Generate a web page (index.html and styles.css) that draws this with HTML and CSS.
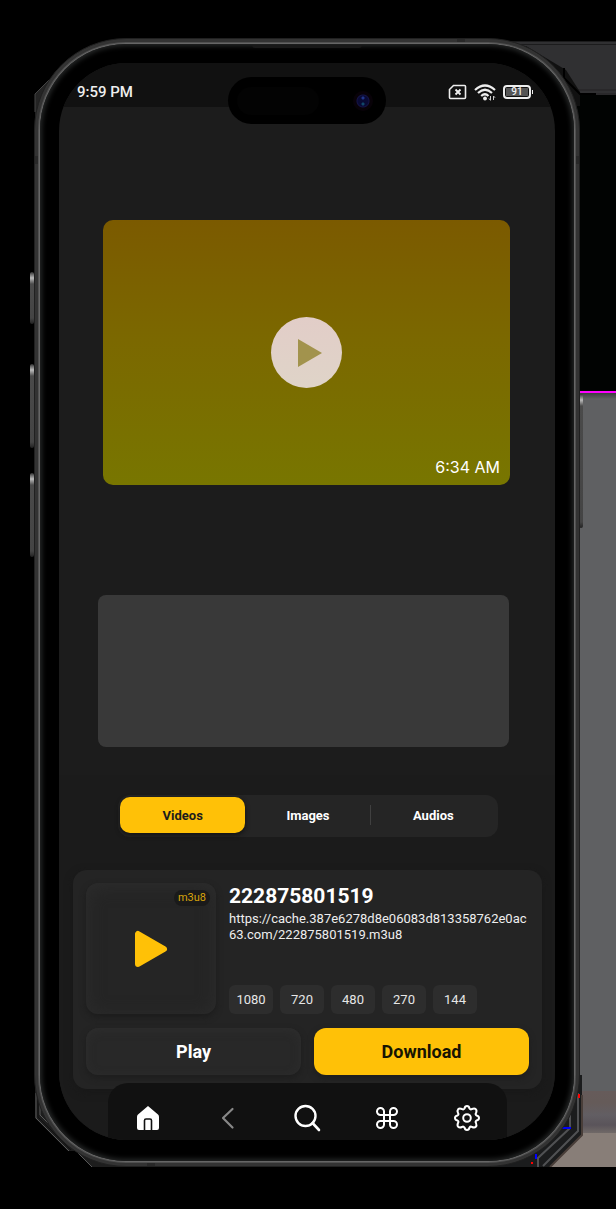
FILE: index.html
```html
<!DOCTYPE html>
<html lang="en">
<head>
<meta charset="utf-8">
<meta name="viewport" content="width=device-width, initial-scale=1">
<title>Video downloader</title>
<link rel="stylesheet" href="styles.css">
</head>
<body>
<div class="stage">
  <div class="backdrop" aria-hidden="true">
    <div class="backdrop-top"></div>
    <div class="backdrop-dark"></div>
    <div class="backdrop-grey"></div>
    <div class="backdrop-haze"></div>
    <div class="backdrop-floor"></div>
  </div>

  <div class="phone">
    <svg class="facet facet-tl" viewBox="0 0 50 60" aria-hidden="true"><path d="M1 60V28L17 12L50 0V60Z" fill="#242424"/><path d="M1 46V28L15 14" fill="none" stroke="#444"/></svg>
    <svg class="facet facet-tr" viewBox="0 0 90 60" aria-hidden="true"><path d="M0 0H20L60 24L74 46V60H0Z" fill="#111"/><path d="M58 22V32L74 48H90" fill="none" stroke="#000" stroke-width="2"/></svg>
    <svg class="facet facet-bl" viewBox="0 0 92 92" aria-hidden="true"><path d="M1 0V43L34 76H42L58 92H92V0Z" fill="#1d1d1d"/><path d="M2 18V43L35 76M6 20V40L58 92" fill="none" stroke="#585858"/><path d="M4 18V42L37 75" fill="none" stroke="#111"/></svg>
    <svg class="facet facet-br" viewBox="0 0 92 92" aria-hidden="true"><path d="M91 0V60L59 92H0V0Z" fill="#1b1c1d"/><path d="M87 18V56L52 91M79 28V53L47 83V92" fill="none" stroke="#505153" stroke-width="2"/><path d="M91 20V60L59 92" fill="none" stroke="#493e39" stroke-width="2"/><path d="M70 53H80M45 79V84" stroke="#00f" stroke-width="2"/><path d="M88 19V23M69 53H71M40 88H42" stroke="#f00" stroke-width="2"/></svg>
    <span class="side-key key-action"></span>
    <span class="side-key key-up"></span>
    <span class="side-key key-down"></span>
    <span class="side-key key-power"></span>

    <div class="frame">
      <span class="antenna antenna-top"></span>
      <span class="antenna antenna-left"></span>
      <span class="antenna antenna-right"></span>
      <span class="antenna antenna-foot"></span>
      <div class="bezel">
        <span class="earpiece"></span>
        <div class="screen">
          <header class="status">
            <time>9:59 PM</time>
            <div class="status-icons">
              <svg width="19" height="16" viewBox="0 0 19 16" aria-label="No SIM"><path d="M5.5 1.5H16.5Q17.5 1.5 17.5 2.5V13.5Q17.5 14.5 16.5 14.5H2.500Q1.500 14.5 1.500 13.5V5.500Z" fill="none" stroke="#eee" stroke-width="1.600"/><path d="M7.500 5.500L12.500 10.500M12.500 5.500L7.500 10.500" stroke="#eee" stroke-width="1.900"/></svg>
              <svg width="22" height="17" viewBox="0 0 22 17" aria-label="Wi-Fi"><path d="M1 6Q11-3 21 6M4 9Q11 2.500 18 9M7.200 12Q11 8.500 14.500 12" fill="none" stroke="#eee" stroke-width="2.200"/><circle cx="11" cy="14.500" r="1.900" fill="#eee"/><path d="M16.500 12V16M15 14.500L16.500 16.500M19.500 16V12M19.500 12L21 13.700" stroke="#ccc" stroke-width="1"/></svg>
              <span class="battery"><span>91</span></span>
            </div>
          </header>
          <div class="island"><span class="island-pill"></span><span class="lens"></span></div>

          <main class="content">
            <section class="video">
              <button class="video-play" type="button" aria-label="Play video"><svg width="26" height="30" viewBox="0 0 26 30"><path d="M1 1L25 15L1 29Z" fill="#a2934d"/></svg></button>
              <time class="video-time">6:34 AM</time>
            </section>
            <section class="placeholder"></section>

            <section class="sheet">
              <nav class="tabs" aria-label="Media type">
                <button class="tab tab-active" type="button">Videos</button>
                <button class="tab" type="button">Images</button>
                <button class="tab tab-last" type="button">Audios</button>
              </nav>
              <article class="card">
                <div class="media">
                  <div class="thumb">
                    <span class="badge">m3u8</span>
                    <svg width="36" height="40" viewBox="0 0 36 40" aria-hidden="true"><path d="M5 5V35L31 20Z" fill="#ffc107" stroke="#ffc107" stroke-width="6" stroke-linejoin="round"/></svg>
                  </div>
                  <div class="info">
                    <h1>222875801519</h1>
                    <p>https://cache.387e6278d8e06083d813358762e0ac63.com/222875801519.m3u8</p>
                    <div class="sizes">
                      <button type="button">1080</button><button type="button">720</button><button type="button">480</button><button type="button">270</button><button type="button">144</button>
                    </div>
                  </div>
                </div>
                <div class="actions">
                  <button class="play" type="button">Play</button>
                  <button class="download" type="button">Download</button>
                </div>
              </article>
            </section>
          </main>

          <nav class="dock" aria-label="Main">
            <button type="button" aria-label="Home"><svg width="28" height="28" viewBox="0 0 28 28"><path d="M14 2L24 10.500Q25 11.300 25 13V24Q25 26 23 26H5Q3 26 3 24V13Q3 11.300 4 10.500Z" fill="#fff"/><path d="M10.500 26V16.500Q10.500 15 12 15H16Q17.500 15 17.500 16.500V26" fill="#fff" stroke="#111" stroke-width="1.600"/></svg></button>
            <button type="button" aria-label="Back"><svg width="28" height="28" viewBox="0 0 28 28"><path d="M18.500 5L9 14L18.500 23.500" fill="none" stroke="#888" stroke-width="2.200" stroke-linecap="round" stroke-linejoin="round"/></svg></button>
            <button type="button" aria-label="Search"><svg width="28" height="28" viewBox="0 0 28 28"><circle cx="12.500" cy="12" r="10" fill="none" stroke="#fff" stroke-width="2.400"/><path d="M19.500 19L26 26" stroke="#fff" stroke-width="2.600" stroke-linecap="round"/></svg></button>
            <button type="button" aria-label="Shortcuts"><svg width="28" height="28" viewBox="0 0 28 28"><path d="M11 11H7.500A3.500 3.500 0 1 1 11 7.500V20.500A3.500 3.500 0 1 1 7.500 17H20.500A3.500 3.500 0 1 1 17 20.500V7.500A3.500 3.500 0 1 1 20.500 11Z" fill="none" stroke="#fff" stroke-width="2"/></svg></button>
            <button type="button" aria-label="Settings"><svg width="28" height="28" viewBox="0 0 28 28"><path d="M11.500 4.500Q12 2 14 2T16.500 4.500Q17.500 6 19 5Q21.500 4 22.800 5.200T23 9Q22 10.500 23.500 11.500Q26 12 26 14T23.500 16.500Q22 17.500 23 19Q24 21.500 22.800 22.800T19 23Q17.500 22 16.500 23.500Q16 26 14 26T11.500 23.500Q10.500 22 9 23Q6.500 24 5.200 22.800T5 19Q6 17.500 4.500 16.500Q2 16 2 14T4.500 11.500Q6 10.500 5 9Q4 6.500 5.200 5.200T9 5Q10.500 6 11.500 4.500Z" fill="none" stroke="#fff" stroke-width="2"/><circle cx="14" cy="14" r="3.800" fill="none" stroke="#fff" stroke-width="2"/></svg></button>
          </nav>
        </div>
      </div>
    </div>
  </div>
</div>
</body>
</html>
```

FILE: styles.css
```css
* { box-sizing: border-box; }

body {
  margin: 0;
  background: #000;
  color: #fff;
  font-family: Roboto, sans-serif;
}

button {
  border: 0;
  padding: 0;
  color: inherit;
  font: inherit;
  cursor: pointer;
}

svg { display: block; }

.stage {
  position: relative;
  padding: 38px 36px 41px 34px;
}

/* Panels behind the right edge of the device */
.backdrop {
  position: absolute;
  inset: 41px 0 41px auto;
  width: 106px;
  display: flex;
  flex-direction: column;
}
.backdrop-top {
  height: 54px;
  background: #303032;
  border-top: 4px double #1c1c1d;
  border-bottom: 6px double #29282a;
}
.backdrop-dark { height: 298px; background: #010302; border-bottom: 2px solid #f0f; }
.backdrop-grey {
  flex: 1;
  background: linear-gradient(#3c3d3e, #5f6062 6px);
}
.backdrop-haze {
  height: 42px;
  background: linear-gradient(#665b5a, #655b59 12px, #625e63 24px, #5a545a 34px, #706967);
}
.backdrop-floor { height: 34px; background: #887e78; }

.phone { position: relative; }

.facet { position: absolute; }
.facet-tl { top: 28px; left: 0; width: 50px; height: 60px; }
.facet-tr { top: 8px; right: -16px; width: 90px; height: 60px; }
.facet-bl { bottom: 0; left: 0; width: 92px; height: 92px; }
.facet-br { bottom: 0; right: -3px; width: 92px; height: 92px; }

.side-key {
  position: absolute;
  left: -4px;
  width: 4px;
  border-radius: 2px;
  background: linear-gradient(#333, #bbb 6px, #4a4a4a 12px, #444 calc(100% - 6px), #222);
}
.key-action { top: 234px; height: 52px; }
.key-up { top: 326px; height: 84px; }
.key-down { top: 435px; height: 84px; }
.key-power { top: 356px; height: 134px; left: auto; right: -3px; }

.frame {
  position: relative;
  padding: 5px;
  border: 1px solid #202020;
  border-radius: 92px;
  background: #333;
}

.antenna { position: absolute; background: #282828; }
.antenna-top { top: 0; right: 114px; width: 8px; height: 6px; }
.antenna-left { top: 117px; left: 0; width: 6px; height: 8px; }
.antenna-right { top: 117px; right: 0; width: 6px; height: 8px; }
.antenna-foot { bottom: 0; left: 112px; width: 8px; height: 6px; }

.bezel {
  position: relative;
  padding: 19px 19px 21px;
  border-radius: 86px;
  background: #000;
  box-shadow: 0 0 0 1px #666, 0 0 0 2px #505050, inset 0 0 5px 2px #262828;
}
.earpiece {
  position: absolute;
  top: 1px;
  left: 50%;
  width: 110px;
  height: 3px;
  margin-left: -55px;
  border-radius: 0 0 4px 4px;
  background: #181818;
}

.screen {
  position: relative;
  overflow: hidden;
  border-radius: 68px;
  background: #1c1c1c;
}

.status {
  height: 44px;
  padding: 14px 24px 0 18px;
  display: flex;
  justify-content: space-between;
  background: #111;
  color: #eee;
  font-size: 15px;
  font-weight: 500;
  line-height: 30px;
}
.status-icons { display: flex; gap: 7px; align-items: center; height: 30px; }
.battery {
  position: relative;
  width: 28px;
  height: 14px;
  padding: 1px;
  border: 2px solid #eee;
  border-radius: 4px;
  font-size: 10px;
  line-height: 8px;
  text-align: center;
}
.battery span { display: block; background: #555; }
.battery::after {
  content: "";
  position: absolute;
  top: 3px;
  right: -4px;
  width: 1px;
  height: 4px;
  background: #eee;
}

.island {
  position: absolute;
  top: 14px;
  left: 50%;
  width: 158px;
  height: 47px;
  margin-left: -79px;
  padding: 0 13px 0 9px;
  border-radius: 24px;
  background: #000;
  display: flex;
  align-items: center;
  justify-content: space-between;
}
.island-pill { width: 82px; height: 28px; border-radius: 14px; background: #030303; }
.lens {
  width: 20px;
  height: 20px;
  border-radius: 50%;
  background:
    radial-gradient(circle at 10px 7px, #20358a 0 1px, transparent 2px),
    radial-gradient(circle at 10px 13px, #10486a 0 1px, transparent 2px),
    radial-gradient(circle, #090a34 0 5px, #141345 6px, #080208 7px);
}

.content { padding-top: 113px; }

.video {
  position: relative;
  height: 265px;
  margin: 0 45px 0 44px;
  border-radius: 10px;
  background: linear-gradient(#7b5a00, #7b6800 45%, #787600);
  display: grid;
  place-items: center;
}
.video-play {
  width: 71px;
  height: 71px;
  padding-left: 6px;
  border-radius: 50%;
  background: linear-gradient(#e2cdc8, #dfd4c8);
  display: grid;
  place-items: center;
}
.video-time {
  position: absolute;
  right: 10px;
  bottom: 8px;
  font: 16px/20px Inter, sans-serif;
}

.placeholder {
  height: 152px;
  margin: 110px 46px 28px 39px;
  border-radius: 8px;
  background: #393939;
}

.sheet {
  padding: 20px 13px 51px 14px;
  background: #1b1b1b;
}

.tabs {
  height: 42px;
  margin: 0 44px 33px 45px;
  padding: 2px 2px 4px;
  border-radius: 12px;
  background: #252525;
  display: flex;
}
.tab {
  position: relative;
  flex: 1;
  border-radius: 10px;
  background: transparent;
  font-size: 13px;
  font-weight: 700;
}
.tab-active {
  background: #ffc107;
  color: #1c1c1c;
  box-shadow: 0 2px 5px #111;
}
.tab-last::before {
  content: "";
  position: absolute;
  left: -1px;
  top: 8px;
  bottom: 8px;
  width: 1px;
  background: #404040;
}

.card {
  padding: 13px 13px 14px;
  border-radius: 14px;
  background: #242424;
  box-shadow: 0 3px 8px #181818;
  display: grid;
  gap: 14px;
}
.media { display: flex; gap: 13px; }
.thumb {
  position: relative;
  width: 130px;
  height: 131px;
  flex: none;
  border-radius: 12px;
  background: #252525;
  box-shadow: inset 0 3px 18px #2d2d2d, 0 3px 6px #1c1c1c;
  display: grid;
  place-items: center;
}
.badge {
  position: absolute;
  top: 7px;
  right: 6px;
  padding: 0 4px;
  border-radius: 8px;
  background: #1a1a1a;
  color: #d9a40b;
  font-size: 11px;
  line-height: 16px;
}
.info {
  flex: 1;
  min-width: 0;
  display: flex;
  flex-direction: column;
}
.info h1 { margin: 0; font-size: 21px; line-height: 26px; }
.info p {
  margin: 2px 0 0;
  color: #eee;
  font-size: 13px;
  line-height: 16px;
  overflow-wrap: anywhere;
}
.sizes { display: flex; gap: 7px; margin-top: auto; }
.sizes button {
  width: 44px;
  height: 29px;
  border-radius: 6px;
  background: #2d2d2d;
  color: #e6e6e6;
  font-size: 13px;
}

.actions { display: grid; grid-template-columns: 1fr 1fr; gap: 13px; }
.actions button {
  height: 47px;
  border-radius: 12px;
  font-size: 18px;
  font-weight: 700;
}
.play { background: #282828; box-shadow: inset 0 2px 10px #2e2e2e, 0 3px 6px #1d1d1d; }
.download { background: #ffc107; color: #171402; box-shadow: 0 3px 6px #1d1d1d; }

.dock {
  position: absolute;
  left: 49px;
  right: 48px;
  bottom: 0;
  height: 57px;
  border-radius: 20px 20px 0 0;
  background: #111;
  display: flex;
  align-items: center;
  padding-top: 13px;
}
.dock button {
  flex: 1;
  height: 44px;
  background: transparent;
  display: grid;
  justify-items: center;
  align-items: start;
  padding-top: 8px;
}
```
